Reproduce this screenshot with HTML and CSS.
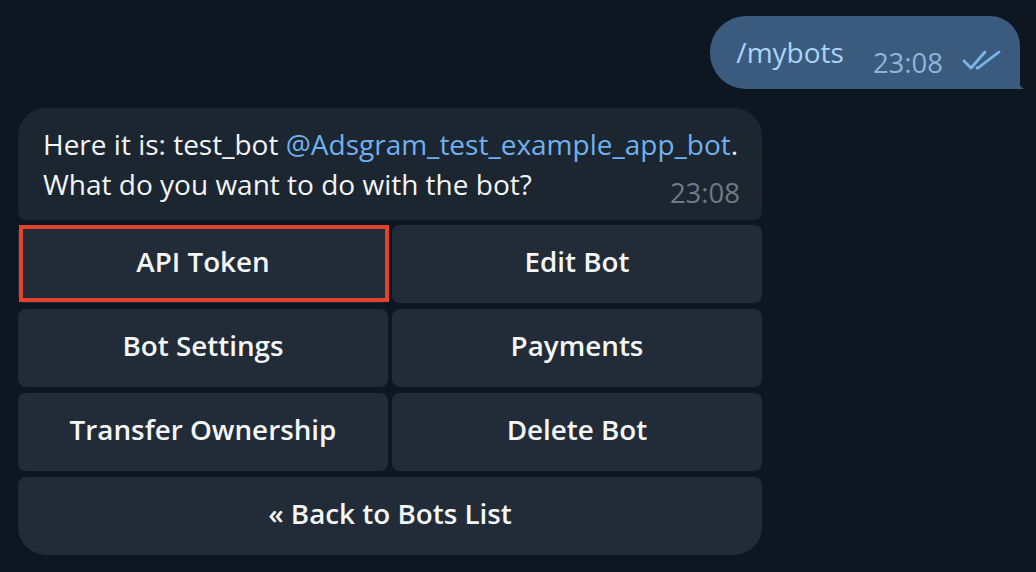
FILE: index.html
```html
<!DOCTYPE html>
<html>
<head>
<meta charset="utf-8">
<link rel="stylesheet" href="styles.css">
</head>
<body>
<div class="chat">
  <div class="out-row">
    <div class="out-bubble">
      <span class="out-text">/mybots</span>
      <span class="out-meta">
        <span class="out-time">23:08</span>
        <svg class="checks" width="42" height="24" viewBox="0 0 42 24">
          <path d="M3 12 L10 19 L24 3" fill="none" stroke="#7bb6ea" stroke-width="2.8" stroke-linecap="round" stroke-linejoin="round"/>
          <path d="M16 19 L17 19 L38 3" fill="none" stroke="#7bb6ea" stroke-width="2.8" stroke-linecap="round" stroke-linejoin="round"/>
        </svg>
      </span>
      <svg class="tail" width="24" height="30" viewBox="0 0 24 30">
        <path d="M0 0 C2 14 8 24 16 30 L0 30 Z" fill="#3b5b7e"/>
      </svg>
    </div>
  </div>
  <div class="in-msg">
    <div class="in-bubble">
      <div class="in-text">Here it is: test_bot <span class="mention">@Adsgram_test_example_app_bot</span>.<br>What do you want to do with the bot?<span class="in-time">23:08</span></div>
    </div>
    <div class="keyboard">
      <div class="kbtn highlighted">API Token</div>
      <div class="kbtn">Edit Bot</div>
      <div class="kbtn">Bot Settings</div>
      <div class="kbtn">Payments</div>
      <div class="kbtn">Transfer Ownership</div>
      <div class="kbtn">Delete Bot</div>
      <div class="kbtn wide last">« Back to Bots List</div>
    </div>
  </div>
</div>
</body>
</html>
```

FILE: styles.css
```css
html, body {
  margin: 0;
  padding: 0;
  background: #0e1621;
  width: 1036px;
  height: 572px;
  overflow: hidden;
  font-family: "Open Sans", "Liberation Sans", sans-serif;
  color: #f5f5f5;
}

.chat {
  display: flex;
  flex-direction: column;
  padding: 16px 16px 0 18px;
}

.out-row {
  display: flex;
  justify-content: flex-end;
}

.out-bubble {
  position: relative;
  display: flex;
  align-items: flex-end;
  background: #3b5b7e;
  height: 73px;
  box-sizing: border-box;
  padding: 0 17px 10px 26px;
  border-radius: 36px 30px 0 36px;
}

.out-text {
  font-size: 28px;
  line-height: 32px;
  color: #a9d4f7;
  margin-bottom: 11px;
}

.out-meta {
  display: flex;
  align-items: center;
  margin-left: 29px;
}

.out-time {
  font-size: 27.5px;
  line-height: 32px;
  color: #8eb4d6;
}

.checks {
  margin-left: 18px;
  margin-top: -4px;
}

.tail {
  position: absolute;
  right: -12px;
  bottom: 0;
}

.in-msg {
  margin-top: 19px;
  width: 744px;
  display: flex;
  flex-direction: column;
  gap: 5px;
}

.in-bubble {
  background: #1c2631;
  border-radius: 28px 28px 8px 8px;
  padding: 16px 22px 16px 25px;
}

.in-text {
  display: flow-root;
  white-space: nowrap;
  font-size: 28px;
  line-height: 40px;
  color: #f3f4f5;
}

.mention {
  color: #70b0ee;
}

.in-time {
  float: right;
  margin-top: 18px;
  font-size: 27.5px;
  line-height: 22px;
  color: #6e7a86;
}

.keyboard {
  display: grid;
  grid-template-columns: 1fr 1fr;
  column-gap: 4px;
  row-gap: 6px;
}

.kbtn {
  position: relative;
  height: 78px;
  box-sizing: border-box;
  padding-bottom: 7px;
  display: flex;
  align-items: center;
  justify-content: center;
  background: #212c38;
  border-radius: 8px;
  font-size: 27.8px;
  font-weight: 600;
  color: #f5f6f7;
}

.kbtn.wide {
  grid-column: 1 / 3;
}

.kbtn.last {
  border-radius: 8px 8px 28px 28px;
}

.highlighted::after {
  content: "";
  position: absolute;
  left: 1px;
  top: 0;
  right: -1px;
  bottom: 1px;
  border: 4px solid #e3432c;
}
```
